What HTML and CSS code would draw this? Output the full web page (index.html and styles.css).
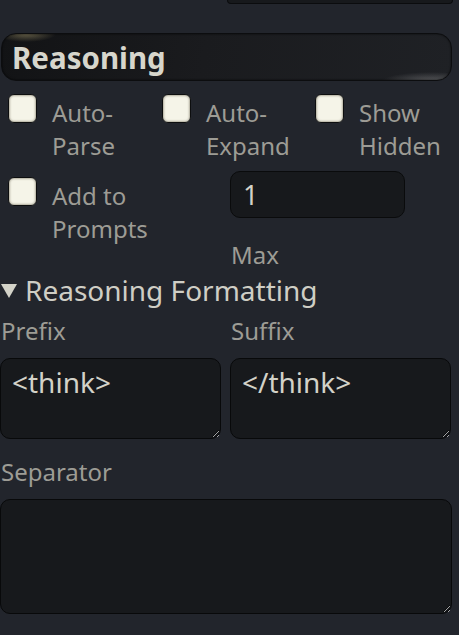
FILE: index.html
```html
<!DOCTYPE html>
<html>
<head>
<meta charset="utf-8">
<link rel="stylesheet" href="styles.css">
</head>
<body>
<div class="page">
  <div class="prev-input"></div>
  <div class="section-head">Reasoning</div>
  <div class="flags">
    <label class="flag"><input type="checkbox" class="cb"><span>Auto-<br>Parse</span></label>
    <label class="flag"><input type="checkbox" class="cb"><span>Auto-<br>Expand</span></label>
    <label class="flag"><input type="checkbox" class="cb"><span>Show<br>Hidden</span></label>
  </div>
  <div class="halves row2">
    <label class="flag"><input type="checkbox" class="cb"><span>Add to<br>Prompts</span></label>
    <div class="max-field">
      <input class="num" type="text" value="1">
      <div class="lbl max-lbl">Max</div>
    </div>
  </div>
  <div class="fmt-head"><span class="tri"></span>Reasoning Formatting</div>
  <div class="halves">
    <div class="field">
      <div class="lbl">Prefix</div>
      <textarea class="ta small">&lt;think&gt;</textarea>
    </div>
    <div class="field">
      <div class="lbl">Suffix</div>
      <textarea class="ta small">&lt;/think&gt;</textarea>
    </div>
  </div>
  <div class="field sep">
    <div class="lbl">Separator</div>
    <textarea class="ta big"></textarea>
  </div>
</div>
</body>
</html>
```
FILE: styles.css
```css
html, body {
  margin: 0;
  padding: 0;
  background: #22252c;
  height: 100%;
  overflow: hidden;
}
body {
  font-family: "Noto Sans", "Open Sans", sans-serif;
  font-size: 24px;
  color: #9d9c95;
}
.page {
  width: 452px;
}
.prev-input {
  margin-left: 227px;
  width: 224px;
  height: 3px;
  border: 1px solid #0b0c0e;
  border-top: none;
  border-radius: 0 0 9px 9px;
  background: #17191c;
}
.section-head {
  margin: 29px 0 0 1px;
  height: 48px;
  box-sizing: border-box;
  border: 1px solid #0c0d0f;
  border-radius: 15px;
  padding: 0 0 0 10px;
  display: flex;
  align-items: center;
  font-weight: bold;
  font-size: 29.5px;
  color: #d7d6cc;
  background:
    radial-gradient(ellipse 30px 8px at 24px 0px, rgba(214, 198, 140, 0.4), rgba(214,198,140,0) 100%),
    radial-gradient(ellipse 50px 9px at 430px 47px, rgba(190, 190, 190, 0.35), rgba(190,190,190,0) 100%),
    linear-gradient(100deg, #121315 0%, #1a1b1e 45%, #1f2125 100%);
  box-shadow: inset 0 0 2px rgba(0,0,0,0.8);
}
.flags {
  display: grid;
  grid-template-columns: 154px 153px 1fr;
  margin-top: 14px;
}
.flag {
  display: flex;
  align-items: flex-start;
  line-height: 33px;
  padding-left: 8px;
}
.flag span {
  padding-top: 1px;
}
.cb {
  appearance: none;
  -webkit-appearance: none;
  margin: 0 15px 0 0;
  width: 29px;
  height: 29px;
  flex: none;
  border-radius: 6px;
  border: 1px solid #0d0e0f;
  background: #f5f4e8;
  box-shadow: inset 0 0 2px 1px rgba(120,115,95,0.55);
  box-sizing: border-box;
  margin-top: -1px;
}
.halves {
  display: grid;
  grid-template-columns: 221px 221px;
  column-gap: 9px;
}
.row2 {
  margin-top: 16px;
}
.max-field {
  margin-top: -7px;
}
.num {
  display: block;
  box-sizing: border-box;
  width: 175px;
  height: 47px;
  margin: 0;
  border: 1px solid #0a0b0c;
  border-radius: 10px;
  background: #17191c;
  color: #d3d2c8;
  font-family: inherit;
  font-size: 27px;
  padding: 0 12px;
  outline: none;
}
.lbl {
  line-height: 33px;
  padding-left: 1px;
}
.max-lbl {
  margin-top: 20px;
}
.fmt-head {
  font-size: 28px;
  line-height: 38px;
  color: #cfcec5;
  display: flex;
  align-items: center;
}
.tri {
  width: 0;
  height: 0;
  border-left: 8.5px solid transparent;
  border-right: 8.5px solid transparent;
  border-top: 14px solid #d4d3c9;
  margin: 2px 8px 0 1px;
}
.field .lbl {
  margin-top: 5px;
}
.ta {
  display: block;
  box-sizing: border-box;
  width: 100%;
  margin: 11px 0 0 0;
  border: 1px solid #08090a;
  border-radius: 10px;
  background: #17191c;
  color: #d3d2c8;
  font-family: inherit;
  font-size: 28px;
  line-height: 33px;
  padding: 7px 11px;
  outline: none;
}
.ta.small {
  height: 81px;
}
.sep .lbl {
  margin-top: 16px;
}
.ta.big {
  height: 115px;
}
```
